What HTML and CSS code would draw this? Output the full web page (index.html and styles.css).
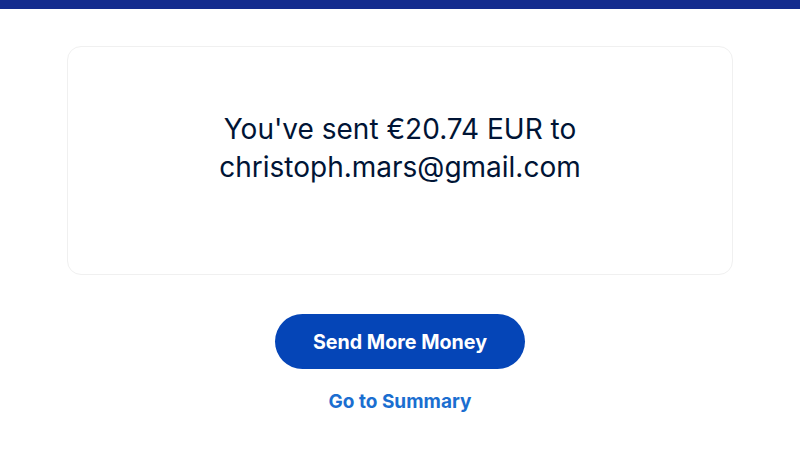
FILE: index.html
```html
<!DOCTYPE html>
<html>
<head>
<meta charset="utf-8">
<link rel="stylesheet" href="styles.css">
</head>
<body>
<div class="topbar"></div>
<main class="main">
  <section class="card">
    <h1 class="msg">You've sent €20.74 EUR to<br>christoph.mars@gmail.com</h1>
  </section>
  <button class="btn">Send More Money</button>
  <a class="link" href="#">Go to Summary</a>
</main>
</body>
</html>
```
FILE: styles.css
```css
html, body {
  margin: 0;
  padding: 0;
  background: #fff;
  font-family: "Inter", "Liberation Sans", sans-serif;
}
.topbar {
  height: 9px;
  background: #142c8e;
}
.main {
  display: flex;
  flex-direction: column;
  align-items: center;
  padding-top: 37px;
}
.card {
  box-sizing: border-box;
  width: 666px;
  height: 229px;
  padding-bottom: 26px;
  border: 1px solid #f0f0f0;
  border-radius: 14px;
  display: flex;
  align-items: center;
  justify-content: center;
}
.msg {
  margin: 0;
  font-size: 28px;
  font-weight: 400;
  line-height: 38px;
  color: #001435;
  text-align: center;
}
.btn {
  margin-top: 39px;
  width: 250px;
  height: 55px;
  border: none;
  border-radius: 28px;
  background: #0545b7;
  color: #fff;
  font-family: inherit;
  font-size: 19.7px;
  font-weight: 700;
}
.link {
  margin-top: 21px;
  color: #1a6ed0;
  font-size: 19px;
  font-weight: 700;
  text-decoration: none;
}
```
